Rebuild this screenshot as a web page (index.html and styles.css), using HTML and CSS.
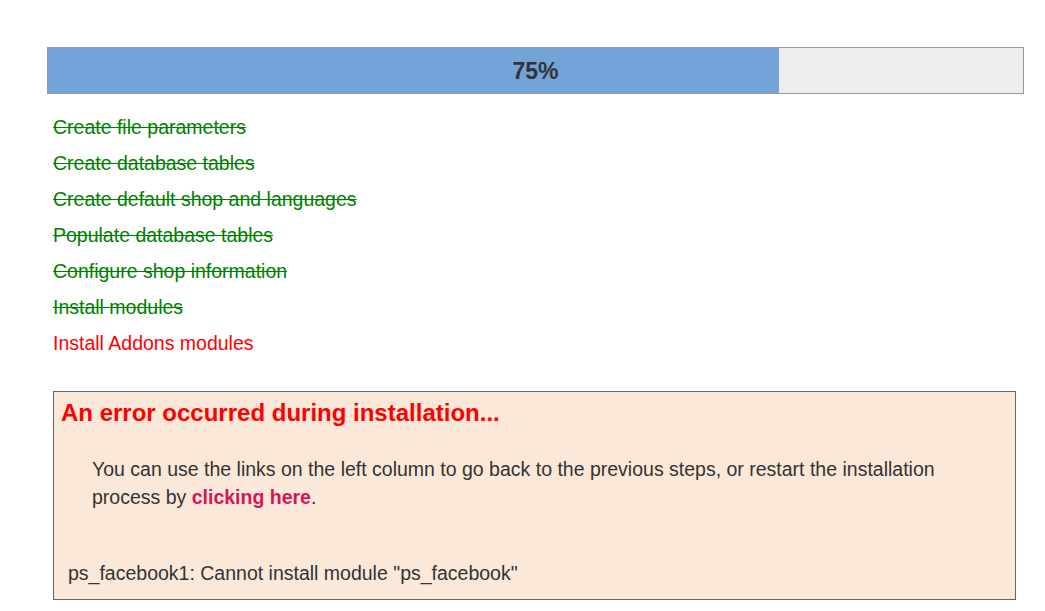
FILE: index.html
```html
<!DOCTYPE html>
<html>
<head>
<meta charset="utf-8">
<link rel="stylesheet" href="styles.css">
</head>
<body>
<div class="page">
  <div class="progress">
    <div class="progress-fill" style="width:75%"></div>
    <div class="progress-label">75%</div>
  </div>
  <ul class="steps">
    <li class="done">Create file parameters</li>
    <li class="done">Create database tables</li>
    <li class="done">Create default shop and languages</li>
    <li class="done">Populate database tables</li>
    <li class="done">Configure shop information</li>
    <li class="done">Install modules</li>
    <li class="fail">Install Addons modules</li>
  </ul>
  <div class="error-box">
    <h3 class="error-title">An error occurred during installation...</h3>
    <p class="error-text">You can use the links on the left column to go back to the previous steps, or restart the installation process by <a class="restart" href="#">clicking here</a>.</p>
    <div class="error-detail">ps_facebook1: Cannot install module "ps_facebook"</div>
  </div>
</div>
</body>
</html>
```
FILE: styles.css
```css
html, body {
  margin: 0;
  padding: 0;
  background: #fff;
}
body {
  font-family: "Liberation Sans", Arial, sans-serif;
  color: #333;
}
.page {
  padding: 47px 21px 0 47px;
}
.progress {
  position: relative;
  height: 45px;
  border: 1px solid #999;
  background: #eeeeee;
}
.progress-fill {
  height: 100%;
  background: #74a3d9;
}
.progress-label {
  position: absolute;
  inset: 0;
  display: flex;
  align-items: center;
  justify-content: center;
  padding-top: 2px;
  font-size: 23px;
  font-weight: bold;
  color: #333;
}
.steps {
  list-style: none;
  margin: 15px 0 0 0;
  padding: 0 0 0 6px;
}
.steps li {
  font-size: 19.5px;
  line-height: 36px;
}
.steps .done {
  color: #008000;
  text-decoration: line-through;
}
.steps .fail {
  color: #ff0000;
}
.error-box {
  margin: 30px 8px 0 6px;
  border: 1px solid #666;
  background: #fbe8d8;
  padding: 8px 7px 12px 7px;
}
.error-title {
  margin: 0;
  font-size: 24px;
  line-height: 26px;
  font-weight: bold;
  color: #ff0000;
}
.error-text {
  margin: 29px 40px 0 31px;
  font-size: 19.5px;
  line-height: 28px;
}
.restart {
  color: #d6155b;
  font-weight: bold;
  text-decoration: none;
}
.error-detail {
  margin: 49px 0 0 7px;
  font-size: 19.5px;
  line-height: 27px;
}
```
